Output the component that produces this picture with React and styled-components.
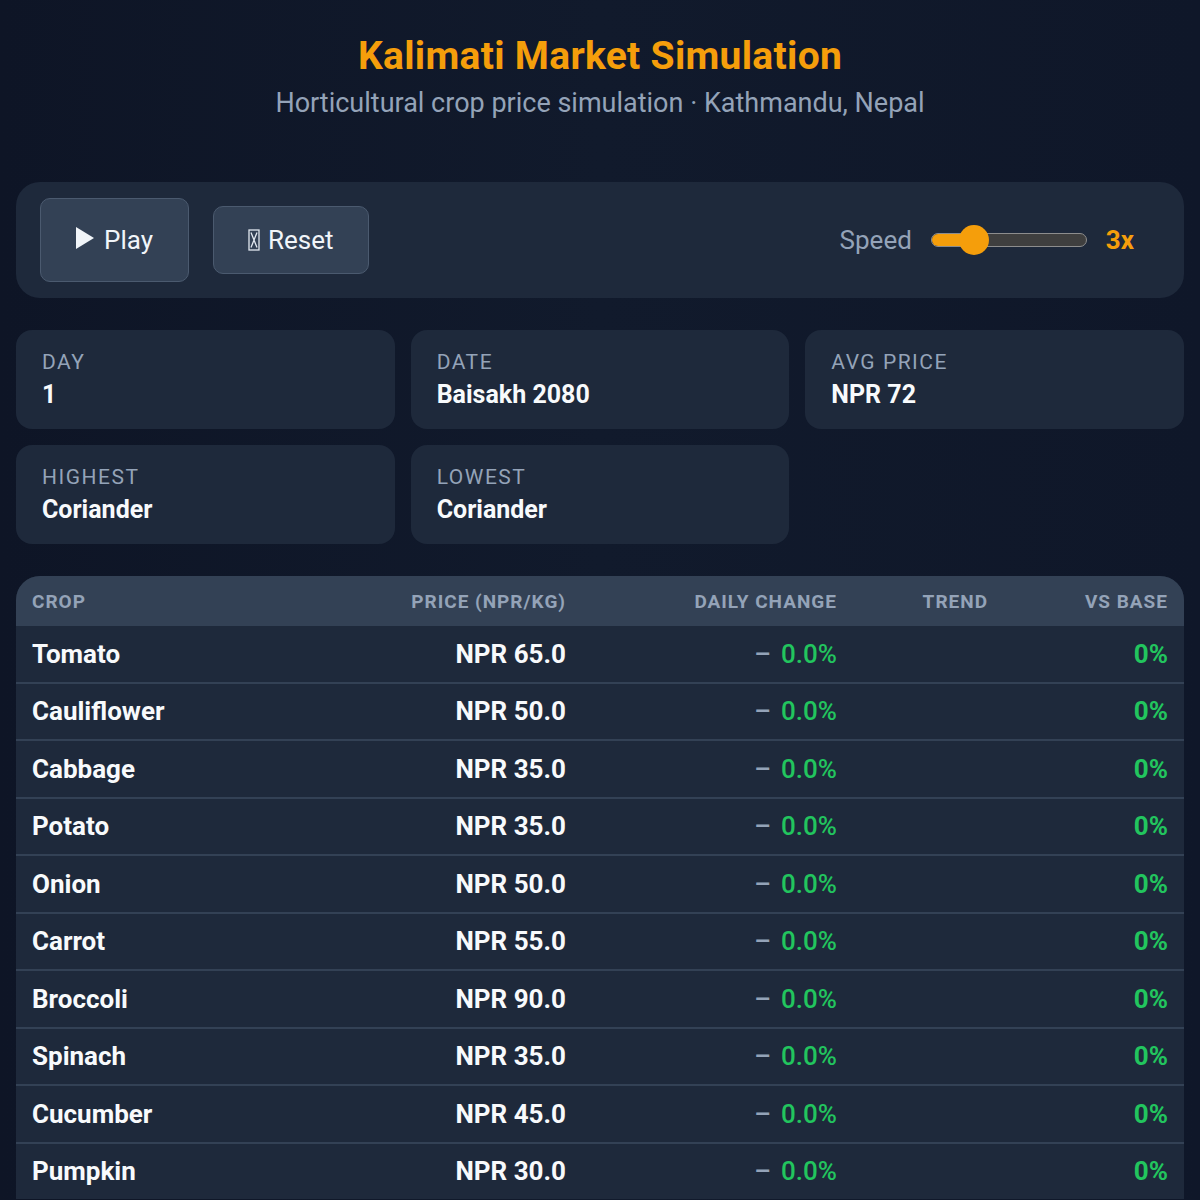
import React from 'react';
import styled, { createGlobalStyle } from 'styled-components';

const GlobalStyle = createGlobalStyle`
  body {
    margin: 0;
    background: #0f172a;
    font-family: Roboto, 'Liberation Sans', sans-serif;
    color: #f1f5f9;
  }
`;

const Page = styled.div`
  padding: 34px 16px 0;
  min-height: 1200px;
  box-sizing: border-box;
  background: linear-gradient(90deg, #0e1526 0%, #111a2c 50%, #0f1729 100%);
`;

const Header = styled.header`
  text-align: center;
  margin-bottom: 63px;
`;

const Title = styled.h1`
  margin: 0;
  font-size: 39px;
  line-height: 44px;
  font-weight: 700;
  color: #f59e0b;
  letter-spacing: 0.3px;
`;

const Subtitle = styled.p`
  margin: 9px 0 0;
  font-size: 27px;
  line-height: 32px;
  color: #94a3b8;
`;

const Controls = styled.section`
  display: flex;
  align-items: center;
  gap: 24px;
  height: 116px;
  padding: 0 24px;
  background: #1e293b;
  border-radius: 24px;
`;

const Button = styled.button`
  display: flex;
  align-items: center;
  gap: 8px;
  height: ${p => (p.$tall ? '84px' : '68px')};
  padding: 0 ${p => (p.$tall ? '35px' : '34px')};
  background: #334155;
  border: 1.5px solid #4b5a6f;
  border-radius: 10px;
  color: #f1f5f9;
  font-family: Roboto, 'Liberation Sans', sans-serif;
  font-size: 26px;
  cursor: pointer;
`;

const PlayIcon = styled.span`
  width: 0;
  height: 0;
  border-top: 11px solid transparent;
  border-bottom: 11px solid transparent;
  border-left: 18px solid #f1f5f9;
  margin-top: -4px;
  margin-right: 2px;
`;

const Tofu = styled.svg`
  width: 12px;
  height: 22px;
  flex: none;
`;

const Speed = styled.div`
  margin-left: auto;
  margin-right: 26px;
  display: flex;
  align-items: center;
  gap: 19px;
`;

const SpeedLabel = styled.span`
  font-size: 26px;
  color: #94a3b8;
`;

const Track = styled.div`
  position: relative;
  width: 156px;
  height: 14px;
  box-sizing: border-box;
  border: 1.5px solid #8d8d8d;
  border-radius: 8px;
  background: #3f3f3f;
`;

const Fill = styled.div`
  height: 100%;
  background: #f59e0b;
  border-radius: 8px 0 0 8px;
`;

const Thumb = styled.div`
  position: absolute;
  top: 50%;
  width: 30px;
  height: 30px;
  border-radius: 50%;
  background: #f59e0b;
  transform: translate(-50%, -50%);
`;

const SpeedValue = styled.span`
  font-size: 26px;
  font-weight: 700;
  color: #f59e0b;
`;

const Stats = styled.section`
  display: grid;
  grid-template-columns: repeat(3, 1fr);
  gap: 16px;
  margin-top: 32px;
`;

const StatCard = styled.div`
  padding: 20px 26px 19px;
  background: #1e293b;
  border-radius: 16px;
`;

const StatLabel = styled.div`
  font-size: 21px;
  line-height: 24px;
  letter-spacing: 1.5px;
  color: #94a3b8;
`;

const StatValue = styled.div`
  margin-top: 6px;
  font-size: 25px;
  line-height: 30px;
  font-weight: 700;
  color: #f8fafc;
`;

const Table = styled.section`
  margin-top: 32px;
  border-radius: 24px 24px 0 0;
  overflow: hidden;
  background: #1e293b;
`;

const cols = '300px 266px 271px 151px 1fr';

const HeadRow = styled.div`
  display: grid;
  grid-template-columns: ${cols};
  align-items: center;
  height: 50px;
  background: #334155;
`;

const HeadCell = styled.div`
  padding: 0 16px;
  text-align: ${p => (p.$left ? 'left' : 'right')};
  font-size: 19px;
  font-weight: 700;
  letter-spacing: 1px;
  color: #94a3b8;
`;

const Row = styled.div`
  display: grid;
  grid-template-columns: ${cols};
  align-items: center;
  border-top: ${p => (p.$first ? 'none' : '2px solid #334155')};
  height: 55.5px;
`;

const Cell = styled.div`
  padding: 0 16px;
  text-align: ${p => (p.$left ? 'left' : 'right')};
  font-size: 26px;
  font-weight: 700;
  color: #f8fafc;
`;

const Dash = styled.span`
  color: #94a3b8;
  font-weight: 500;
  margin-right: 10px;
`;

const Green = styled.span`
  color: #22c55e;
  font-weight: ${p => (p.$bold ? 700 : 500)};
`;

const stats = [
  { label: 'DAY', value: '1' },
  { label: 'DATE', value: 'Baisakh 2080' },
  { label: 'AVG PRICE', value: 'NPR 72' },
  { label: 'HIGHEST', value: 'Coriander' },
  { label: 'LOWEST', value: 'Coriander' },
];

const crops = [
  ['Tomato', 65],
  ['Cauliflower', 50],
  ['Cabbage', 35],
  ['Potato', 35],
  ['Onion', 50],
  ['Carrot', 55],
  ['Broccoli', 90],
  ['Spinach', 35],
  ['Cucumber', 45],
  ['Pumpkin', 30],
];

// missing-glyph box, as the reset button shows it
const MissingGlyph = () => (
  <Tofu viewBox="0 0 12 22" fill="none" stroke="#e2e8f0" strokeWidth="1.3">
    <rect x="1" y="1" width="10" height="20" />
    <path d="M3 3.5 L9 18.5 M9 3.5 L3 18.5" />
  </Tofu>
);

export default function App() {
  const speed = 3;
  const pct = ((speed - 1) / 9) * 100;
  return (
    <Page>
      <GlobalStyle />
      <Header>
        <Title>Kalimati Market Simulation</Title>
        <Subtitle>Horticultural crop price simulation · Kathmandu, Nepal</Subtitle>
      </Header>

      <Controls>
        <Button $tall><PlayIcon />Play</Button>
        <Button><MissingGlyph />Reset</Button>
        <Speed>
          <SpeedLabel>Speed</SpeedLabel>
          <Track>
            <Fill style={{ width: `${pct + 10}%` }} />
            <Thumb style={{ left: `${pct + 5}%` }} />
          </Track>
          <SpeedValue>{speed}x</SpeedValue>
        </Speed>
      </Controls>

      <Stats>
        {stats.map(s => (
          <StatCard key={s.label}>
            <StatLabel>{s.label}</StatLabel>
            <StatValue>{s.value}</StatValue>
          </StatCard>
        ))}
      </Stats>

      <Table>
        <HeadRow>
          <HeadCell $left>CROP</HeadCell>
          <HeadCell>PRICE (NPR/KG)</HeadCell>
          <HeadCell>DAILY CHANGE</HeadCell>
          <HeadCell>TREND</HeadCell>
          <HeadCell>VS BASE</HeadCell>
        </HeadRow>
        {crops.map(([name, price], i) => (
          <Row key={name} $first={i === 0}>
            <Cell $left>{name}</Cell>
            <Cell>NPR {price.toFixed(1)}</Cell>
            <Cell><Dash>–</Dash><Green>0.0%</Green></Cell>
            <Cell />
            <Cell><Green $bold>0%</Green></Cell>
          </Row>
        ))}
      </Table>
    </Page>
  );
}
